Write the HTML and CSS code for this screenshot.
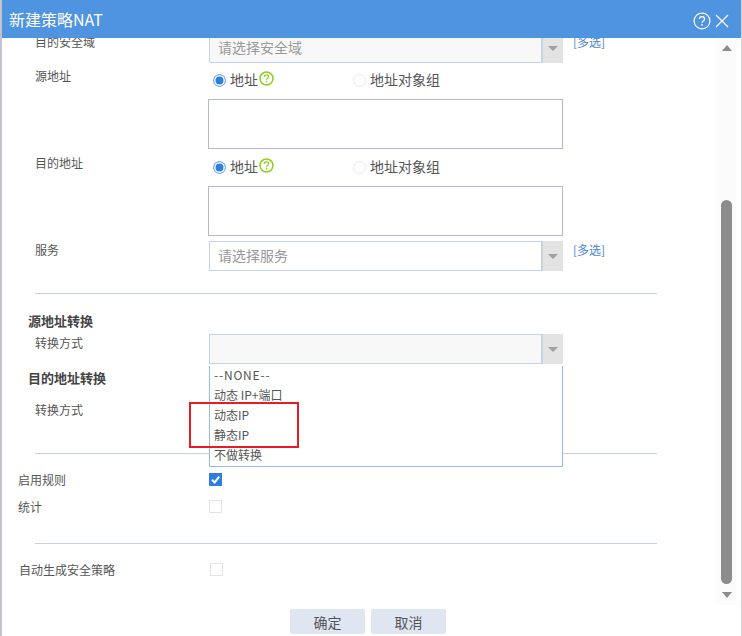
FILE: index.html
```html
<!DOCTYPE html>
<html lang="zh-CN">
<head>
<meta charset="utf-8">
<title>新建策略NAT</title>
<link rel="stylesheet" href="styles.css">
</head>
<body>
<div class="dialog">
  <header class="titlebar">
    <span class="title">新建策略NAT</span>
    <div class="tools">
      <svg class="tool-help" width="18" height="18" viewBox="0 0 18 18"><circle cx="9" cy="9" r="7.9" fill="none" stroke="#fff" stroke-width="1.2"/><path d="M6.4 7.1c0-1.6 1.2-2.5 2.6-2.5s2.6.9 2.6 2.3c0 2-2.6 2-2.6 3.9" fill="none" stroke="#fff" stroke-width="1.3"/><rect x="8.3" y="12" width="1.4" height="1.6" fill="#fff"/></svg>
      <svg class="tool-close" width="14" height="14" viewBox="0 0 14 14"><path d="M1 1l12 12M13 1L1 13" stroke="#fff" stroke-width="1.2" fill="none"/></svg>
    </div>
  </header>
  <div class="body">
    <main class="form">
      <div class="row row-first">
        <label class="lbl">目的安全域</label>
        <div class="select select-muted"><span class="ph">请选择安全域</span><span class="arrow"><i></i></span></div>
        <a class="multi">[多选]</a>
      </div>
      <div class="row row-addr">
        <label class="lbl">源地址</label>
        <div class="addr">
          <div class="radios">
            <span class="radio on"></span><span class="rtext">地址</span>
            <svg class="hint" width="15" height="15" viewBox="0 0 15 15"><circle cx="7.5" cy="7.5" r="6.5" fill="none" stroke="#8fcf1e" stroke-width="1.5"/><path d="M5.3 5.9c0-1.3 1-2 2.2-2s2.2.7 2.2 1.9c0 1.5-2.2 1.5-2.2 3" fill="none" stroke="#8fcf1e" stroke-width="1.3"/><rect x="6.8" y="9.8" width="1.4" height="1.4" fill="#8fcf1e"/></svg>
            <span class="radio off"></span><span class="rtext">地址对象组</span>
          </div>
          <div class="box"></div>
        </div>
      </div>
      <div class="row row-addr">
        <label class="lbl">目的地址</label>
        <div class="addr">
          <div class="radios">
            <span class="radio on"></span><span class="rtext">地址</span>
            <svg class="hint" width="15" height="15" viewBox="0 0 15 15"><circle cx="7.5" cy="7.5" r="6.5" fill="none" stroke="#8fcf1e" stroke-width="1.5"/><path d="M5.3 5.9c0-1.3 1-2 2.2-2s2.2.7 2.2 1.9c0 1.5-2.2 1.5-2.2 3" fill="none" stroke="#8fcf1e" stroke-width="1.3"/><rect x="6.8" y="9.8" width="1.4" height="1.4" fill="#8fcf1e"/></svg>
            <span class="radio off"></span><span class="rtext">地址对象组</span>
          </div>
          <div class="box"></div>
        </div>
      </div>
      <div class="row row-service">
        <label class="lbl">服务</label>
        <div class="select"><span class="ph">请选择服务</span><span class="arrow"><i></i></span></div>
        <a class="multi">[多选]</a>
      </div>
      <hr class="rule rule-a">
      <h3 class="section section-src">源地址转换</h3>
      <div class="row row-convert">
        <label class="lbl">转换方式</label>
        <div class="select select-muted">
          <span class="ph"></span><span class="arrow"><i></i></span>
          <ul class="dropdown">
            <li class="opt-none">--NONE--</li>
            <li>动态 IP+端口</li>
            <li>动态IP</li>
            <li>静态IP</li>
            <li>不做转换</li>
            <li class="mark" aria-hidden="true"></li>
          </ul>
        </div>
      </div>
      <h3 class="section section-dst">目的地址转换</h3>
      <div class="row row-dst">
        <label class="lbl">转换方式</label>
      </div>
      <hr class="rule rule-a">
      <div class="row-check row-enable">
        <label class="lbl-wide">启用规则</label>
        <span class="check on"><svg width="13" height="13" viewBox="0 0 13 13"><path d="M3 6.8l2.6 2.6L10.2 3.6" fill="none" stroke="#fff" stroke-width="2"/></svg></span>
      </div>
      <div class="row-check row-stat">
        <label class="lbl-wide">统计</label>
        <span class="check"></span>
      </div>
      <hr class="rule rule-b">
      <div class="row-check row-auto">
        <label class="lbl-wide lbl-auto">自动生成安全策略</label>
        <span class="check"></span>
      </div>
    </main>
    <aside class="scrollbar">
      <span class="sb-up"></span>
      <span class="sb-thumb"></span>
      <span class="sb-down"></span>
    </aside>
  </div>
  <footer class="footer">
    <button class="btn">确定</button>
    <button class="btn">取消</button>
  </footer>
</div>
</body>
</html>
```

FILE: styles.css
```css
* { box-sizing: border-box; }
html, body { margin: 0; padding: 0; background: #fff; }
body {
  width: 742px;
  height: 636px;
  overflow: hidden;
  font-family: "Noto Sans CJK SC", "Noto Sans", sans-serif;
  color: #555;
  font-size: 12px;
}
.dialog {
  width: 742px;
  height: 636px;
  display: flex;
  flex-direction: column;
  border-left: 2px solid #c3c3cb;
  border-right: 1px solid #d4d4d4;
}
.titlebar {
  flex: none;
  height: 38px;
  background: #4f94e0;
  color: #fff;
  display: flex;
  align-items: center;
  justify-content: space-between;
  padding: 0 12px 0 7px;
}
.title { font-size: 16px; }
.tools { display: flex; align-items: center; gap: 4px; padding-top: 3px; }
.tool-help, .tool-close { display: block; }
.body { flex: none; height: 567px; display: flex; overflow: hidden; }
.form { width: 714px; flex: none; }
.row { display: flex; align-items: flex-start; padding-left: 33px; }
.lbl { flex: none; width: 174px; line-height: 18px; }
.row-first { margin-top: -5px; }
.row-addr { margin-top: 4px; }
.row-addr + .row-addr { margin-top: 5px; }
.row-service { margin-top: 5px; }
.select {
  position: relative;
  width: 354px;
  height: 30px;
  display: flex;
  flex: none;
}
.ph {
  flex: 1;
  border: 1px solid #c5d3e5;
  border-right-width: 2px;
  background: #fff;
  color: #999;
  font-size: 14px;
  line-height: 26px;
  padding-left: 8px;
}
.select-muted .ph { background: #f8f8f8; }
.arrow {
  width: 20px;
  flex: none;
  background: #e3e3e3;
  display: flex;
  align-items: center;
  justify-content: center;
}
.arrow i {
  width: 0;
  height: 0;
  border-left: 5px solid transparent;
  border-right: 5px solid transparent;
  border-top: 5px solid #a0a0a0;
  display: block;
}
.multi { margin-left: 10px; color: #4a85d8; line-height: 18px; font-size: 12px; }
.addr { width: 355px; margin-left: -1px; flex: none; }
.radios { height: 26px; display: flex; align-items: center; padding: 0 0 0 5px; }
.radio {
  width: 13px;
  height: 13px;
  border-radius: 50%;
  flex: none;
  border: 1px solid #e8e8e8;
  background: #fff;
  position: relative;
}
.radio.on { border-color: #7fb0ea; background: #2f7de1; box-shadow: inset 0 0 0 1.5px #fff; }
.radio.off { margin-left: 79px; }
.rtext { font-size: 14px; margin: -2px 0 0 4px; }
.hint { flex: none; margin: -4px 0 0 1px; display: block; }
.box { height: 50px; margin-top: 6px; border: 1px solid #b5b8d0; background: #fff; }
.rule { border: 0; height: 1px; background: #c6d0e0; margin: 0 0 0 33px; width: 622px; }
.rule-a { margin-top: 22px; }
.section { margin: 0 0 0 26px; font-size: 13px; line-height: 20px; font-weight: bold; color: #444; }
.section-src { margin-top: 17px; }
.section-dst { margin-top: 4px; }
.row-convert { margin-top: 3px; position: relative; z-index: 2; }
.row-dst { margin-top: 13px; height: 30px; }
.dropdown {
  position: absolute;
  top: 32px;
  left: 0;
  width: 354px;
  height: 101px;
  margin: 0;
  padding: 0 0 0 4px;
  list-style: none;
  background: #fff;
  border: 1px solid #94bcf0;
  border-top: 0;
  font-size: 12px;
  z-index: 3;
}
.dropdown li { height: 20px; line-height: 18px; }
.dropdown .opt-none { letter-spacing: 0.8px; }
.dropdown .mark {
  position: absolute;
  left: -21px;
  top: 36px;
  width: 110px;
  height: 46px;
  border: 2px solid #e81c24;
}
.row-check { display: flex; align-items: flex-start; padding-left: 16px; height: 18px; }
.lbl-wide { width: 191px; flex: none; line-height: 18px; }
.lbl-auto { padding-left: 1px; }
.row-enable { margin-top: 17px; }
.row-stat { margin-top: 9px; }
.rule-b { margin-top: 27px; }
.row-auto { margin-top: 17px; }
.check {
  width: 13px;
  height: 13px;
  margin-top: 2px;
  border: 1px solid #e3e3e3;
  background: #fff;
  display: block;
  flex: none;
}
.row-auto .check { margin-left: 1px; }
.check.on { border: 0; background: #2f7de1; }
.check svg { display: block; }
.scrollbar {
  width: 21px;
  flex: none;
  background: #fbfbfb;
  display: flex;
  flex-direction: column;
  align-items: center;
}
.sb-up, .sb-down {
  width: 0;
  height: 0;
  border-left: 5.5px solid transparent;
  border-right: 5.5px solid transparent;
  display: block;
}
.sb-up { margin-top: 7px; border-bottom: 6px solid #8c8c8c; }
.sb-thumb {
  width: 11px;
  height: 384px;
  margin-top: 149px;
  background: #8c8c8c;
  border-radius: 5.5px;
}
.sb-down { margin-top: 8px; border-top: 6px solid #8c8c8c; }
.footer {
  flex: 1;
  display: flex;
  gap: 6px;
  padding: 4px 0 0 288px;
}
.btn {
  width: 75px;
  height: 25px;
  border: 0;
  border-radius: 2px;
  background: #dfe5f1;
  color: #555;
  font-family: inherit;
  font-size: 14px;
  padding: 0;
}
```
